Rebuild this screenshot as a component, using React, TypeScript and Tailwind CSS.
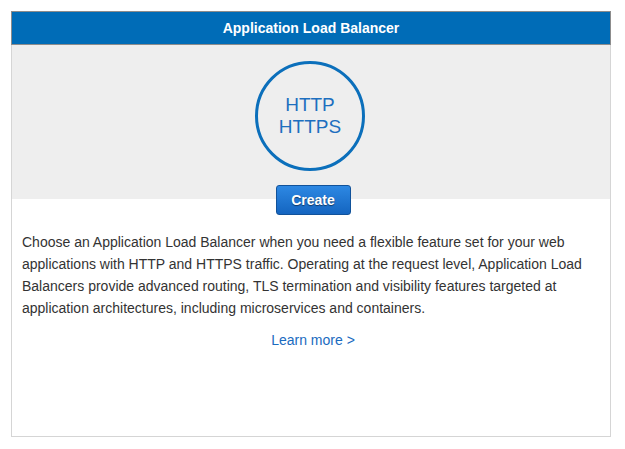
export default function App() {
  return (
    <div className="min-h-[449px] bg-white pl-[11px] pt-[11px] font-['Liberation_Sans',Arial,sans-serif]">
      <div className="flex h-[426px] w-[600px] flex-col border border-[#d5d5d5] bg-white">
        <div className="-mx-px -mt-px flex h-[34px] items-center justify-center border border-[#8c8c8c] bg-[#006cb7] text-[14px] font-bold text-white">
          Application Load Balancer
        </div>
        <div className="flex flex-col items-center bg-[#eeeeee] pt-[16px] pb-[28px]">
          <div className="mr-[2px] flex h-[110px] w-[110px] flex-col items-center justify-center rounded-full border-[3px] border-[#0b6fbb] text-[19px] leading-[22px] text-[#1d6fbf]">
            <span>HTTP</span>
            <span>HTTPS</span>
          </div>
        </div>
        <div className="-mt-[14px] flex justify-center pl-[4px]">
          <button className="h-[30px] w-[75px] rounded-[3px] border border-[#11529a] bg-gradient-to-b from-[#2d88e3] to-[#1465c0] text-[14px] font-bold text-white [text-shadow:0_1px_1px_rgba(0,0,0,0.5)]">
            Create
          </button>
        </div>
        <p className="mt-[16px] px-[10px] text-[14px] leading-[22px] text-[#333333]">
          Choose an Application Load Balancer when you need a flexible feature set for your web
          applications with HTTP and HTTPS traffic. Operating at the request level, Application Load
          Balancers provide advanced routing, TLS termination and visibility features targeted at
          application architectures, including microservices and containers.
        </p>
        <div className="mt-[10px] pl-[4px] text-center text-[14px] leading-[22px]">
          <a href="#" className="text-[#1a6bc0]">
            Learn more &gt;
          </a>
        </div>
      </div>
    </div>
  );
}
